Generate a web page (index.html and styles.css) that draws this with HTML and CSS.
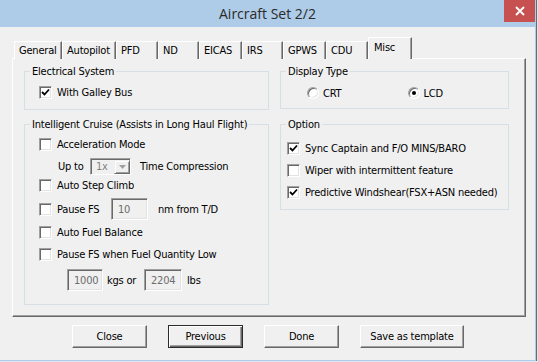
FILE: index.html
```html
<!DOCTYPE html>
<html lang="en">
<head>
    <meta charset="UTF-8">
    <title>Aircraft Set 2/2</title>
    <link rel="stylesheet" href="styles.css">
</head>
<body>
    <div class="window">
        <div class="titlebar">
            <span class="title">Aircraft Set 2/2</span>
            <button class="close" aria-label="Close">
                <svg width="10" height="10" viewBox="0 0 10 10"><path d="M1 1L9 9M9 1L1 9" stroke="#fff" stroke-width="1.8"/></svg>
            </button>
        </div>

        <div class="tabs">
            <div class="tab">General</div>
            <div class="tab">Autopilot</div>
            <div class="tab">PFD</div>
            <div class="tab">ND</div>
            <div class="tab">EICAS</div>
            <div class="tab">IRS</div>
            <div class="tab">GPWS</div>
            <div class="tab">CDU</div>
            <div class="tab active">Misc</div>
        </div>

        <div class="panel">
            <div class="col col-left">
                <fieldset class="group electrical">
                    <legend>Electrical System</legend>
                    <div class="group-body">
                        <div class="row">
                            <span class="cb checked"><svg width="9" height="9" viewBox="0 0 9 9"><path d="M1 4L3.5 6.5L8 1.5" fill="none" stroke="#000" stroke-width="1.8"/></svg></span>
                            <span>With Galley Bus</span>
                        </div>
                    </div>
                </fieldset>

                <fieldset class="group cruise">
                    <legend>Intelligent Cruise (Assists in Long Haul Flight)</legend>
                    <div class="group-body cruise-rows">
                        <div class="row">
                            <span class="cb"></span>
                            <span>Acceleration Mode</span>
                        </div>
                        <div class="row upto">
                            <span class="lbl-upto">Up to</span>
                            <span class="combo">
                                <span class="combo-text">1x</span>
                                <span class="combo-btn"><svg width="7" height="4" viewBox="0 0 7 4"><path d="M0 0H7L3.5 4Z" fill="#a0a0a0"/></svg></span>
                            </span>
                            <span class="after-combo">Time Compression</span>
                        </div>
                        <div class="row">
                            <span class="cb"></span>
                            <span>Auto Step Climb</span>
                        </div>
                        <div class="row">
                            <span class="cb"></span>
                            <span class="lbl-pause">Pause FS</span>
                            <span class="tb tb-nm">10</span>
                            <span class="after-nm">nm from T/D</span>
                        </div>
                        <div class="row">
                            <span class="cb"></span>
                            <span>Auto Fuel Balance</span>
                        </div>
                        <div class="row">
                            <span class="cb"></span>
                            <span>Pause FS when Fuel Quantity Low</span>
                        </div>
                        <div class="row fuel">
                            <span class="tb tb-kgs">1000</span>
                            <span class="lbl-kgs">kgs or</span>
                            <span class="tb tb-lbs">2204</span>
                            <span class="after-lbs">lbs</span>
                        </div>
                    </div>
                </fieldset>
            </div>

            <div class="col col-right">
                <fieldset class="group display">
                    <legend>Display Type</legend>
                    <div class="group-body radios">
                        <div class="radio-item">
                            <span class="radio"></span>
                            <span>CRT</span>
                        </div>
                        <div class="radio-item">
                            <span class="radio selected"></span>
                            <span>LCD</span>
                        </div>
                    </div>
                </fieldset>

                <fieldset class="group option">
                    <legend>Option</legend>
                    <div class="group-body option-rows">
                        <div class="row">
                            <span class="cb checked"><svg width="9" height="9" viewBox="0 0 9 9"><path d="M1 4L3.5 6.5L8 1.5" fill="none" stroke="#000" stroke-width="1.8"/></svg></span>
                            <span>Sync Captain and F/O MINS/BARO</span>
                        </div>
                        <div class="row">
                            <span class="cb"></span>
                            <span>Wiper with intermittent feature</span>
                        </div>
                        <div class="row">
                            <span class="cb checked"><svg width="9" height="9" viewBox="0 0 9 9"><path d="M1 4L3.5 6.5L8 1.5" fill="none" stroke="#000" stroke-width="1.8"/></svg></span>
                            <span>Predictive Windshear(FSX+ASN needed)</span>
                        </div>
                    </div>
                </fieldset>
            </div>
        </div>

        <div class="buttons">
            <button class="btn">Close</button>
            <button class="btn default">Previous</button>
            <button class="btn">Done</button>
            <button class="btn wide">Save as template</button>
        </div>
    </div>
</body>
</html>
```

FILE: styles.css
```css
* {
    box-sizing: border-box;
}
body {
    margin: 0;
    background-color: #dfe5ec;
    font-family: "DejaVu Sans Condensed", "Liberation Sans", sans-serif;
    font-size: 11px;
    line-height: 13px;
    letter-spacing: -0.2px;
    color: #000;
}
.window {
    position: relative;
    width: 536px;
    height: 361px;
    background-color: #f0f0f0;
    border-right: 1px solid #aecbe7;
    border-bottom: 1px solid #aecbe7;
    box-shadow: 1px 0 0 #6b6b6b;
}
.titlebar {
    height: 27px;
    background-color: #aecbe7;
    text-align: center;
}
.title {
    font-family: "Open Sans", sans-serif;
    font-size: 14px;
    letter-spacing: 0;
    line-height: 27px;
    color: #2a2a2a;
}
.close {
    position: absolute;
    top: 0;
    right: 0;
    width: 31px;
    height: 22px;
    border: none;
    padding: 0;
    background-color: #c75050;
    display: flex;
    align-items: center;
    justify-content: center;
}

/* tabs */
.tabs {
    position: relative;
    z-index: 1;
    display: grid;
    grid-template-columns: 48px 54px 42px 41px 43px 41px 43px 42px 44px;
    align-items: end;
    height: 22px;
    margin: 10px 0 0 14px;
}
.tab {
    height: 18px;
    padding: 2px 0 0 4px;
    border-top: 1px solid #fff;
    border-left: 1px solid #fff;
    border-right: 1px solid #696969;
    box-shadow: inset -1px 0 #a0a0a0;
    background-color: #f0f0f0;
    white-space: nowrap;
}
.tab.active {
    height: 22px;
    padding: 3px 0 0 5px;
}

/* panel */
.panel {
    display: flex;
    gap: 11px;
    width: 514px;
    height: 259px;
    margin: -1px 0 0 12px;
    padding: 6px 0 0 11px;
    border: 1px solid;
    border-color: #fff #696969 #696969 #fff;
    box-shadow: inset -1px -1px #a0a0a0;
}
.col-left {
    width: 245px;
}
.col-right {
    width: 229px;
}
.group {
    margin: 0;
    padding: 0;
    border: 1px solid #d5dfe5;
    min-width: 0;
}
.group legend {
    margin-left: 5px;
    padding: 0 2px;
    line-height: 13px;
}
.group-body {
    padding-left: 14px;
}
.row {
    display: flex;
    align-items: center;
    gap: 5px;
    white-space: nowrap;
}

.electrical .group-body {
    padding-top: 4px;
    padding-bottom: 7px;
}
.electrical .row {
    height: 20px;
}
.cruise {
    margin-top: 8px;
}
.cruise-rows {
    display: grid;
    grid-template-rows: 22px 22px 16px 32px 14px 30px 22px;
    padding-top: 2px;
    padding-bottom: 13px;
}

.display .group-body {
    padding: 5px 0 5px 26px;
}
.option {
    margin-top: 9px;
}
.option-rows {
    display: grid;
    grid-template-rows: 22px 22px 22px;
    padding: 6px 0 6px 6px;
}

/* checkbox */
.cb {
    flex: none;
    display: flex;
    align-items: center;
    justify-content: center;
    width: 13px;
    height: 13px;
    background-color: #fff;
    border: 1px solid;
    border-color: #a0a0a0 #fff #fff #a0a0a0;
    box-shadow: inset 1px 1px #696969, inset -1px -1px #e3e3e3;
}

/* radio */
.radios {
    display: flex;
}
.radio-item {
    display: flex;
    align-items: center;
    gap: 4px;
    width: 126px;
    height: 20px;
}
.radio {
    flex: none;
    display: flex;
    align-items: center;
    justify-content: center;
    width: 12px;
    height: 12px;
    border-radius: 50%;
    background-color: #fff;
    border: 1px solid;
    border-color: #a0a0a0 #fff #fff #a0a0a0;
    box-shadow: inset 1px 1px #696969, inset -1px -1px #e3e3e3;
}
.radio.selected::after {
    content: "";
    width: 4px;
    height: 4px;
    border-radius: 50%;
    background-color: #000;
}

/* up to row */
.upto {
    gap: 0;
    margin-left: 19px;
}
.lbl-upto {
    width: 32px;
}
.combo {
    display: flex;
    width: 41px;
    height: 17px;
    margin-top: 1px;
    background-color: #f0f0f0;
    border: 1px solid;
    border-color: #a0a0a0 #fff #fff #a0a0a0;
    box-shadow: inset 1px 1px #696969;
}
.combo-text {
    padding: 1px 0 0 5px;
    color: #838383;
}
.combo-btn {
    display: flex;
    align-items: center;
    justify-content: center;
    width: 16px;
    margin: 1px 0 0 auto;
    border: 1px solid;
    border-color: #f0f0f0 #696969 #696969 #f0f0f0;
    box-shadow: inset 1px 1px #fff, inset -1px -1px #a0a0a0;
}
.after-combo {
    margin-left: 9px;
}

/* text boxes */
.tb {
    flex: none;
    height: 22px;
    padding: 4px 0 0 6px;
    color: #6d6d6d;
    background-color: #f0f0f0;
    border: 1px solid;
    border-color: #a0a0a0 #fff #fff #a0a0a0;
    box-shadow: inset 1px 1px #696969, inset -1px -1px #e3e3e3;
}
.lbl-pause {
    width: 49px;
}
.tb-nm {
    width: 37px;
}
.after-nm {
    margin-left: 5px;
}
.fuel {
    gap: 0;
    margin-left: 28px;
}
.tb-kgs {
    width: 36px;
}
.lbl-kgs {
    width: 41px;
    padding-left: 4px;
}
.tb-lbs {
    width: 38px;
}
.after-lbs {
    margin-left: 5px;
}

/* buttons */
.buttons {
    display: flex;
    gap: 21px;
    margin: 8px 0 0 72px;
}
.btn {
    width: 75px;
    height: 23px;
    padding: 0;
    font-family: inherit;
    font-size: 11px;
    letter-spacing: inherit;
    color: #000;
    background-color: #f0f0f0;
    border: 1px solid;
    border-color: #fff #696969 #696969 #fff;
    box-shadow: inset -1px -1px #a0a0a0;
}
.btn.default {
    border-color: #2b2b2b;
    box-shadow: inset 1px 1px #fff, inset -1px -1px #696969, inset -2px -2px #a0a0a0;
}
.btn.wide {
    width: 104px;
}
```
